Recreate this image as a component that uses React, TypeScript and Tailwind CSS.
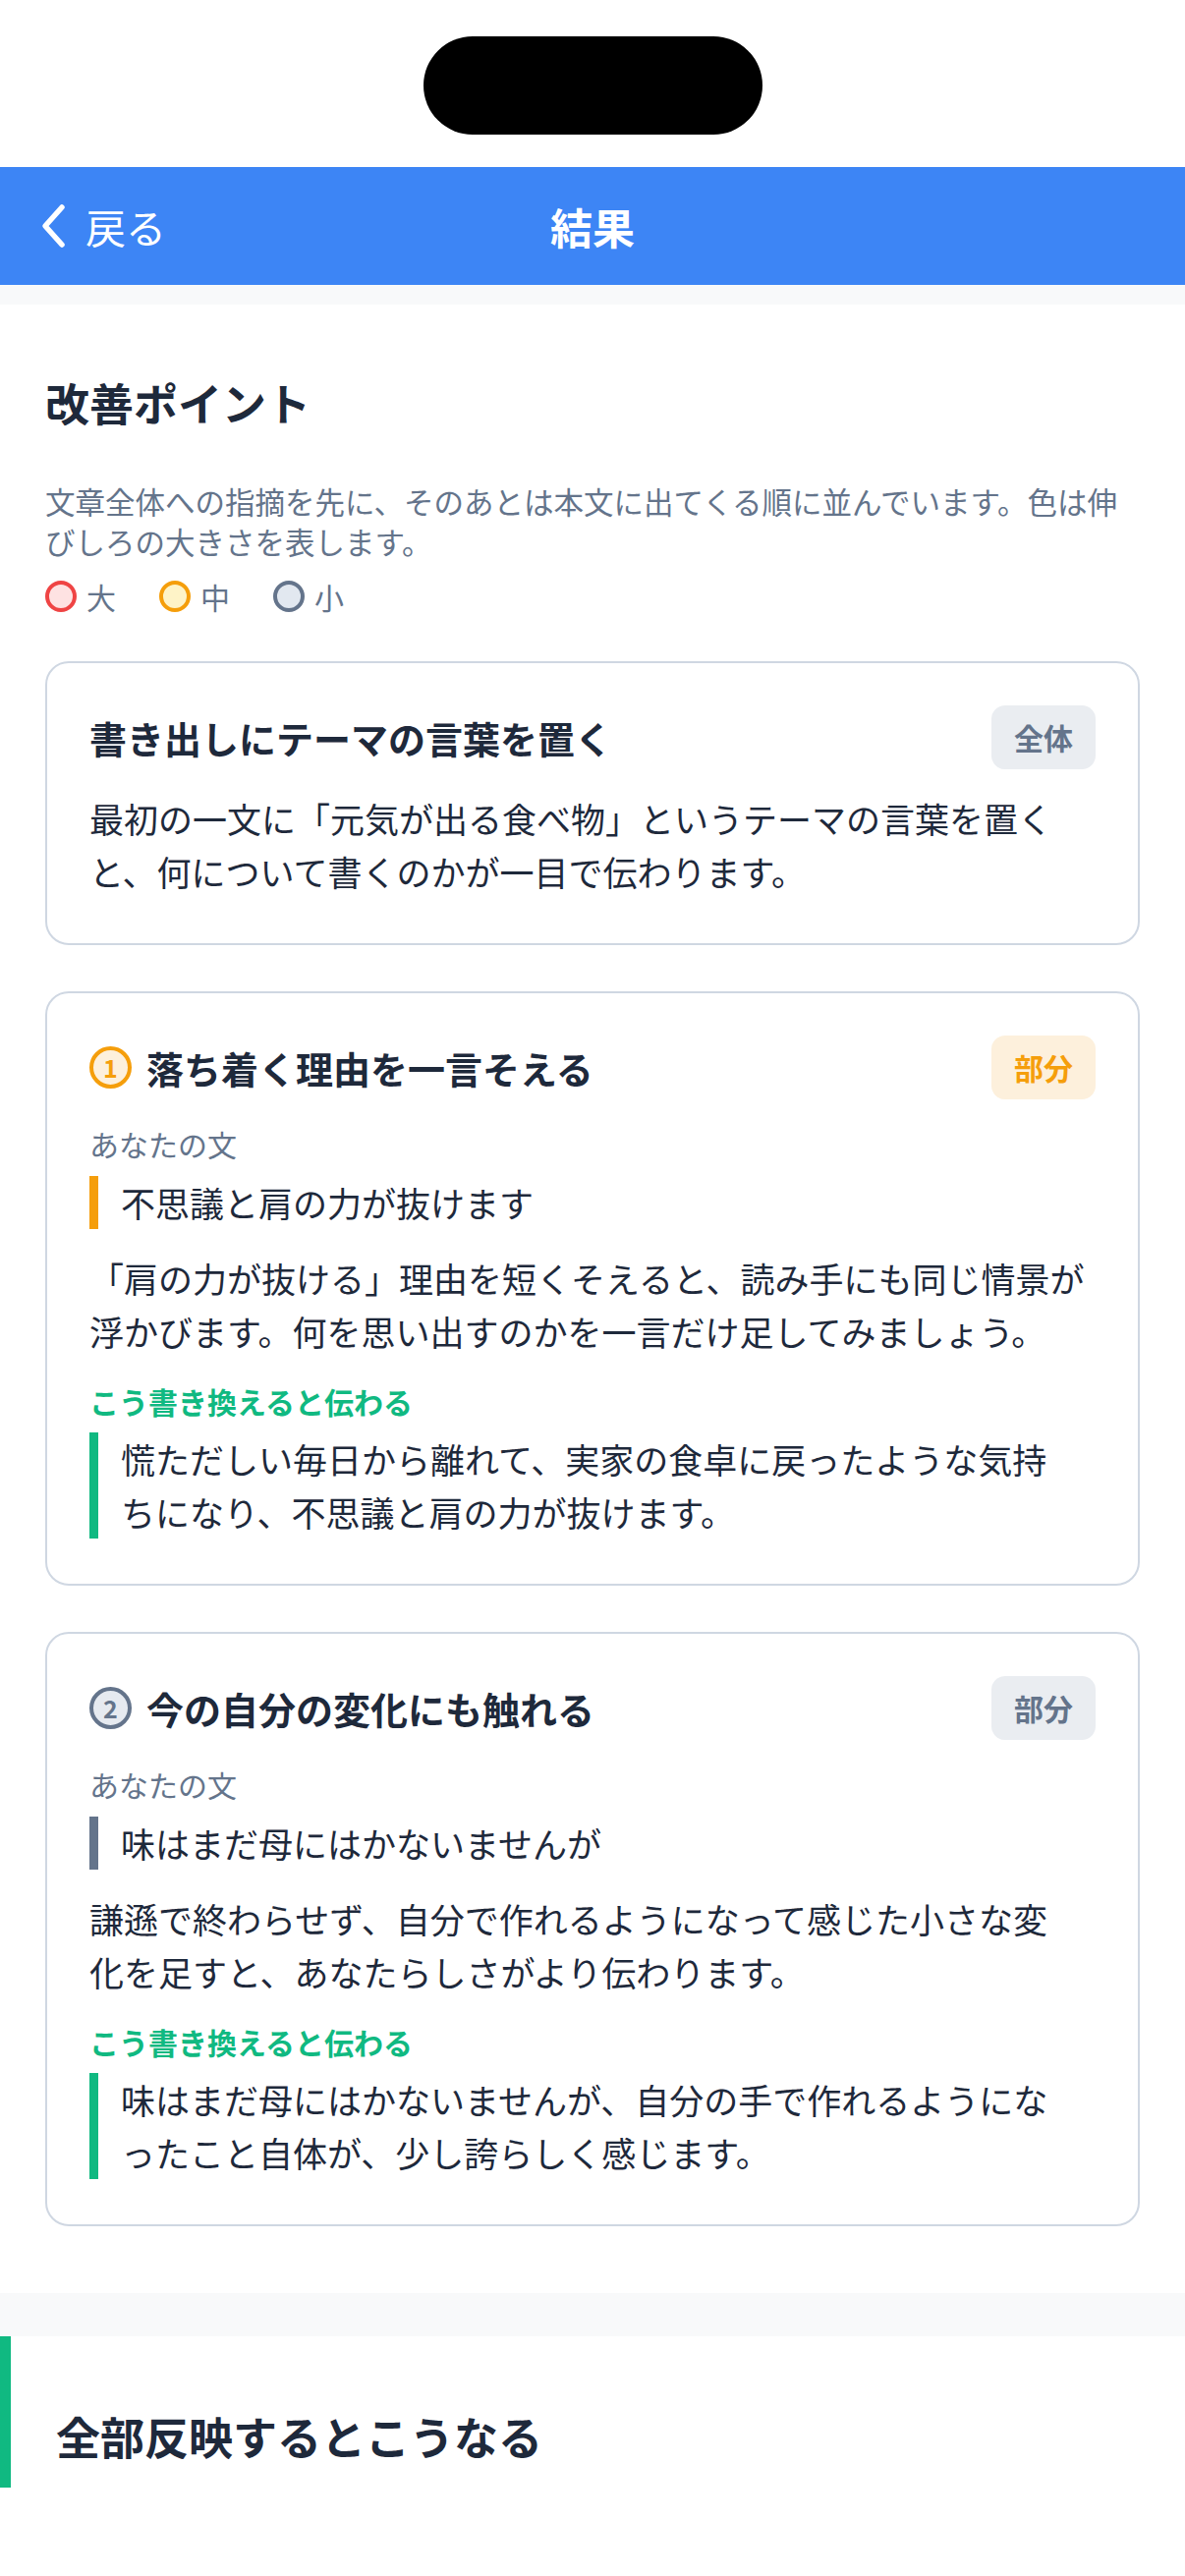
import React from 'react';

type Tone = 'amber' | 'slate';

const tones: Record<Tone, { circle: string; badge: string; bar: string }> = {
  amber: {
    circle: 'border-[#f59e0b] bg-[#fdf0dc] text-[#f59e0b]',
    badge: 'bg-[#fdf0dc] text-[#f59e0b]',
    bar: 'border-[#f59e0b]',
  },
  slate: {
    circle: 'border-[#64748b] bg-[#e6eaf0] text-[#64748b]',
    badge: 'bg-[#eaedf1] text-[#64748b]',
    bar: 'border-[#64748b]',
  },
};

interface PointProps {
  num?: number;
  tone: Tone;
  title: string;
  badge: string;
  original?: string;
  body: string;
  rewrite?: string;
}

const PointCard: React.FC<PointProps> = ({ num, tone, title, badge, original, body, rewrite }) => {
  const t = tones[tone];
  return (
    <div className="rounded-[24px] border-2 border-[#cfd7e2] bg-white px-[43px] pt-[43px] pb-[46px]">
      {/* 見出し行 */}
      <div className="flex items-center justify-between">
        <div className="flex items-center gap-[15px]">
          {num !== undefined && (
            <span
              className={`flex h-[43px] w-[43px] items-center justify-center rounded-full border-[4px] text-[25px] font-bold leading-none ${t.circle}`}
            >
              {num}
            </span>
          )}
          <h3 className="text-[38px] font-bold leading-[48px] text-[#1e293b]">{title}</h3>
        </div>
        <span className={`flex h-[65px] items-center rounded-[14px] px-[23px] text-[30px] font-bold ${t.badge}`}>
          {badge}
        </span>
      </div>

      {original && (
        <>
          <p className="mt-[24px] text-[30px] leading-[42px] text-[#64748b]">あなたの文</p>
          <p className={`mt-[12px] border-l-[9px] pl-[23px] pr-[23px] text-[35px] leading-[54px] text-[#1e293b] ${t.bar}`}>
            {original}
          </p>
        </>
      )}

      <p className="mt-[23px] whitespace-pre-line text-[35px] leading-[54px] text-[#1e293b]">{body}</p>

      {rewrite && (
        <>
          <p className="mt-[23px] text-[30px] font-bold leading-[42px] text-[#10b981]">こう書き換えると伝わる</p>
          <p className="mt-[11px] border-l-[9px] border-[#10b981] pl-[23px] pr-[23px] text-[35px] leading-[54px] text-[#1e293b]">
            {rewrite}
          </p>
        </>
      )}
    </div>
  );
};

const LegendItem: React.FC<{ ring: string; label: string }> = ({ ring, label }) => (
  <div className="flex items-center gap-[10px]">
    <span className={`h-[32px] w-[32px] rounded-full border-[4px] ${ring}`} />
    <span className="text-[30px] leading-[40px] text-[#64748b]">{label}</span>
  </div>
);

export default function App() {
  return (
    <div className="min-h-screen bg-white font-['Noto_Sans_CJK_JP',sans-serif]">
      {/* ステータスバー */}
      <div className="flex h-[170px] justify-center bg-white pt-[37px]">
        <div className="h-[100px] w-[345px] rounded-full bg-black" />
      </div>

      {/* ヘッダー */}
      <header className="grid h-[120px] grid-cols-[1fr_auto_1fr] items-center bg-[#3d85f5] text-white">
        <div className="flex items-center gap-[18px] pl-[38px]">
          <svg width="31" height="46" viewBox="0 0 31 46" fill="none">
            <polyline
              points="25,4 8,23 25,42"
              stroke="white"
              strokeWidth="5.5"
              strokeLinecap="round"
              strokeLinejoin="round"
            />
          </svg>
          <span className="text-[41px] leading-none">戻る</span>
        </div>
        <h1 className="text-[43px] font-bold leading-none">結果</h1>
        <div />
      </header>

      <div className="h-[20px] bg-[#f8f9fa]" />

      {/* 改善ポイント */}
      <section className="bg-white px-[46px] pt-[72px] pb-[68px]">
        <h2 className="text-[45px] font-bold leading-[56px] text-[#1e293b]">改善ポイント</h2>
        <p className="mt-[52px] text-[30.5px] leading-[41px] text-[#64748b]">
          文章全体への指摘を先に、そのあとは本文に出てくる順に並んでいます。色は伸びしろの大きさを表します。
        </p>
        <div className="mt-[15px] flex items-center gap-[44px]">
          <LegendItem ring="border-[#ef4444] bg-[#fee2e2]" label="大" />
          <LegendItem ring="border-[#f59e0b] bg-[#fef3c7]" label="中" />
          <LegendItem ring="border-[#64748b] bg-[#e2e8f0]" label="小" />
        </div>

        <div className="mt-[46px] flex flex-col gap-[47px]">
          <PointCard
            tone="slate"
            title="書き出しにテーマの言葉を置く"
            badge="全体"
            body="最初の一文に「元気が出る食べ物」というテーマの言葉を置くと、何について書くのかが一目で伝わります。"
          />
          <PointCard
            num={1}
            tone="amber"
            title="落ち着く理由を一言そえる"
            badge="部分"
            original="不思議と肩の力が抜けます"
            body="「肩の力が抜ける」理由を短くそえると、読み手にも同じ情景が浮かびます。何を思い出すのかを一言だけ足してみましょう。"
            rewrite="慌ただしい毎日から離れて、実家の食卓に戻ったような気持ちになり、不思議と肩の力が抜けます。"
          />
          <PointCard
            num={2}
            tone="slate"
            title="今の自分の変化にも触れる"
            badge="部分"
            original="味はまだ母にはかないませんが"
            body={'謙遜で終わらせず、自分で作れるようになって感じた小さな変\n化を足すと、あなたらしさがより伝わります。'}
            rewrite="味はまだ母にはかないませんが、自分の手で作れるようになったこと自体が、少し誇らしく感じます。"
          />
        </div>
      </section>

      <div className="h-[44px] bg-[#f8f9fa]" />

      {/* 全部反映 */}
      <section className="bg-white">
        <div className="border-l-[11px] border-[#10b981] pt-[78px] pb-[28px] pl-[46px]">
          <h2 className="text-[45px] font-bold leading-[48px] text-[#1e293b]">全部反映するとこうなる</h2>
        </div>
      </section>
    </div>
  );
}
